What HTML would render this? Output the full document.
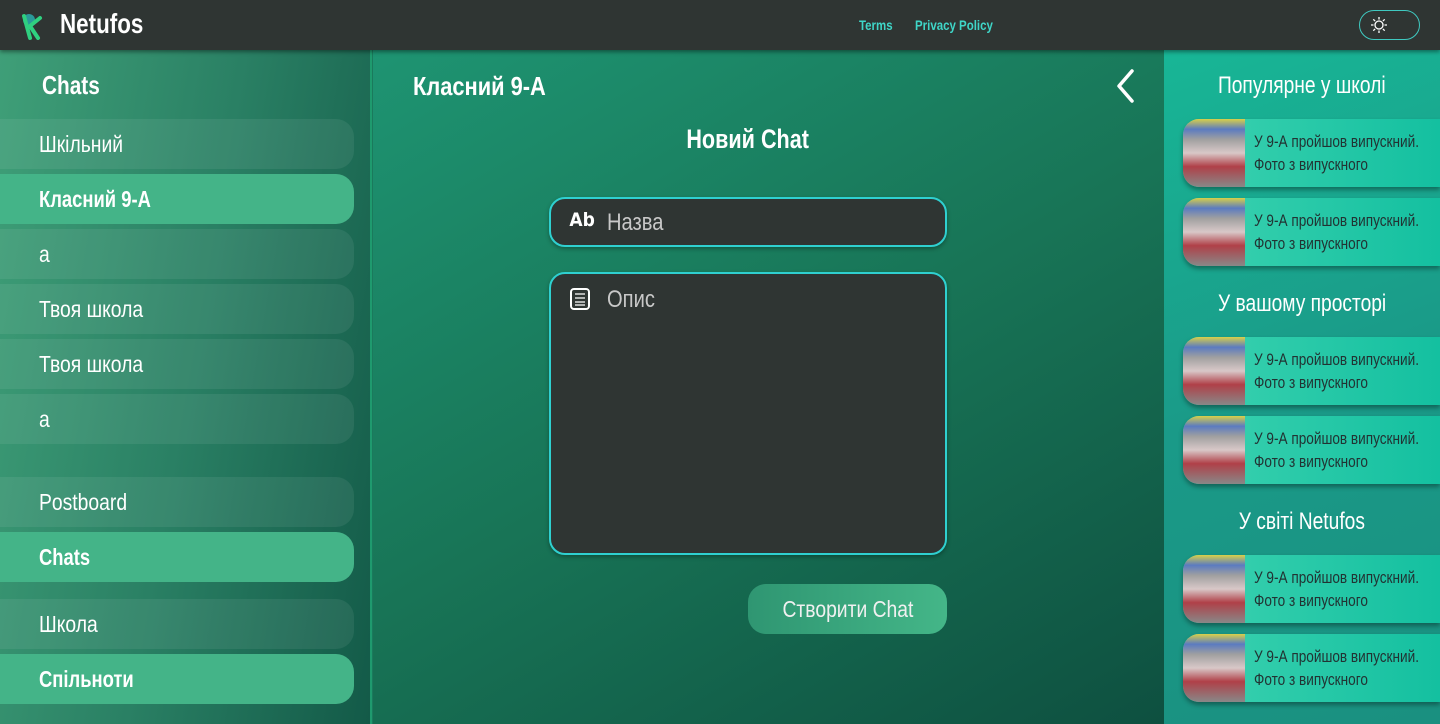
<!DOCTYPE html>
<html><head><meta charset="utf-8"><style>
*{margin:0;padding:0;box-sizing:border-box}
body{width:1440px;height:724px;overflow:hidden;font-family:"Liberation Sans",sans-serif;color:#fff;background:#1a7a5c;position:relative}
.c{display:inline-block;transform:scaleX(.84);transform-origin:left center;white-space:nowrap}
.cc{display:inline-block;transform:scaleX(.84);transform-origin:center center;white-space:nowrap}
.hdr{position:absolute;left:0;top:0;width:1440px;height:50px;background:#2f3533;z-index:5;box-shadow:0 2px 4px rgba(0,0,0,.4)}
.logo{position:absolute;left:60px;top:8px;font-size:28px;font-weight:bold}
.logo .c{transform:scaleX(.8)}
.links{position:absolute;top:17px;left:859px;font-size:14px;color:#3fd6c8;font-weight:bold}
.tog{position:absolute;left:1359px;top:10px;width:61px;height:30px;border:1.5px solid #3fc9c0;border-radius:15px}
.left{position:absolute;left:0;top:50px;width:372px;height:674px;background:linear-gradient(100deg,#3f9f78 0%,#2a8064 50%,#135a48 100%);border-right:2px solid #1f9a6e}
.center{position:absolute;left:373px;top:50px;width:791px;height:674px;background:linear-gradient(150deg,#1e9472 0%,#187456 50%,#0e5040 100%)}
.right{position:absolute;left:1164px;top:50px;width:276px;height:674px;background:linear-gradient(160deg,#18b696 0%,#1a9a88 50%,#1a9080 100%)}
.it{position:absolute;left:0;width:354px;height:50px;border-radius:0 18px 18px 0;background:rgba(255,255,255,.07);font-size:23px;padding-left:39px;line-height:50px}
.it.a{background:#44b488;font-weight:bold}
.it.a .c{transform:scaleX(.8)}
h2{position:absolute;font-size:26px;font-weight:bold}
.inp{position:absolute;left:549px;width:398px;background:#2f3533;border:2px solid #2fd0d0;border-radius:16px;box-shadow:0 2px 4px rgba(0,0,0,.3)}
.ph{position:absolute;left:56px;font-size:24px;color:#c8c8c8}
.btn{position:absolute;left:748px;top:584px;width:199px;height:50px;border-radius:18px;background:linear-gradient(90deg,#2f9672,#44b688);font-size:23px;text-align:center;line-height:50px;color:#f0f0f0}
.sec{position:absolute;left:1164px;width:276px;text-align:center;font-size:24px}
.sec .cc{transform:scaleX(.8)}
.card{position:absolute;left:1183px;width:257px;height:68px;border-radius:16px 0 0 16px;overflow:hidden;background:linear-gradient(90deg,#3cd2b0,#14c0a0);box-shadow:0 3px 5px rgba(0,0,0,.35)}
.img{position:absolute;left:0;top:0;width:62px;height:68px;background:linear-gradient(180deg,#d8d04a 0%,#5b7bc0 15%,#a0a0a0 30%,#d8c8c8 50%,#b04048 70%,#888 100%)}
.card p{position:absolute;left:71px;top:11px;font-size:17px;color:#233;line-height:23px;white-space:nowrap}
.card p span{display:block;transform:scaleX(.8);transform-origin:left}
</style></head><body>
<div class="hdr">
<svg style="position:absolute;left:18px;top:12px" width="26" height="28" viewBox="0 0 26 28"><circle cx="11" cy="8" r="6" fill="#2a9a9a"/><path d="M6 4 L12 26 M12 14 L22 6 M12 14 L20 26" stroke="#2fd080" stroke-width="4" fill="none" stroke-linecap="round"/></svg>
<div class="logo"><span class="c">Netufos</span></div>
<div class="links"><span class="c" style="transform:scaleX(.82)">Terms</span><span class="c" style="position:absolute;left:56px;transform:scaleX(.82)">Privacy Policy</span></div>
<div class="tog"><svg style="position:absolute;left:10px;top:5px" width="18" height="18" viewBox="0 0 18 18" stroke="#fff" stroke-width="1.3" fill="none"><circle cx="9" cy="9" r="4"/><path d="M9 1v2.5M9 14.5V17M1 9h2.5M14.5 9H17M3.3 3.3l1.8 1.8M12.9 12.9l1.8 1.8M3.3 14.7l1.8-1.8M12.9 5.1l1.8-1.8"/></svg></div>
</div>
<div class="left"></div>
<div class="center"></div>
<div class="right"></div>
<h2 style="left:42px;top:70px"><span class="c" style="transform:scaleX(.8)">Chats</span></h2>
<div class="it" style="top:119px"><span class="c">Шкільний</span></div>
<div class="it a" style="top:174px"><span class="c">Класний 9-А</span></div>
<div class="it" style="top:229px"><span class="c">а</span></div>
<div class="it" style="top:284px"><span class="c">Твоя школа</span></div>
<div class="it" style="top:339px"><span class="c">Твоя школа</span></div>
<div class="it" style="top:394px"><span class="c">а</span></div>
<div class="it" style="top:477px"><span class="c">Postboard</span></div>
<div class="it a" style="top:532px"><span class="c">Chats</span></div>
<div class="it" style="top:599px"><span class="c">Школа</span></div>
<div class="it a" style="top:654px"><span class="c">Спільноти</span></div>
<h2 style="left:413px;top:71px;font-size:26px"><span class="c" style="transform:scaleX(.84)">Класний 9-А</span></h2>
<svg style="position:absolute;left:1114px;top:68px" width="22" height="36" viewBox="0 0 22 36"><path d="M18 3 L5 18 L18 33" stroke="#fff" stroke-width="3.5" fill="none" stroke-linecap="round" stroke-linejoin="round"/></svg>
<h2 style="left:373px;width:750px;text-align:center;top:124px;font-size:27px"><span class="cc" style="transform:scaleX(.8)">Новий Chat</span></h2>
<div class="inp" style="top:197px;height:50px"><span style="position:absolute;left:17px;top:10px;font-family:'DejaVu Sans',sans-serif;font-weight:bold;font-size:19px;transform:scaleX(.9);display:inline-block">Ab</span><span class="ph c" style="top:10px">Назва</span></div>
<div class="inp" style="top:272px;height:283px"><svg style="position:absolute;left:19px;top:14px" width="20" height="22" viewBox="0 0 20 22" stroke="#fff" stroke-width="2" fill="none"><rect x="1" y="1" width="18" height="20" rx="3"/><path d="M5 6h10M5 10h10M5 14h10M5 17h10" stroke-width="1.3"/></svg><span class="ph c" style="top:12px">Опис</span></div>
<div class="btn"><span class="cc">Створити Chat</span></div>
<div class="sec" style="top:72px"><span class="cc">Популярне у школі</span></div>
<div class="sec" style="top:290px"><span class="cc">У вашому просторі</span></div>
<div class="sec" style="top:508px"><span class="cc">У світі Netufos</span></div>
<div class="card" style="top:119px"><div class="img"></div><p><span>У 9-А пройшов випускний.</span><span>Фото з випускного</span></p></div>
<div class="card" style="top:198px"><div class="img"></div><p><span>У 9-А пройшов випускний.</span><span>Фото з випускного</span></p></div>
<div class="card" style="top:337px"><div class="img"></div><p><span>У 9-А пройшов випускний.</span><span>Фото з випускного</span></p></div>
<div class="card" style="top:416px"><div class="img"></div><p><span>У 9-А пройшов випускний.</span><span>Фото з випускного</span></p></div>
<div class="card" style="top:555px"><div class="img"></div><p><span>У 9-А пройшов випускний.</span><span>Фото з випускного</span></p></div>
<div class="card" style="top:634px"><div class="img"></div><p><span>У 9-А пройшов випускний.</span><span>Фото з випускного</span></p></div>
</body></html>
